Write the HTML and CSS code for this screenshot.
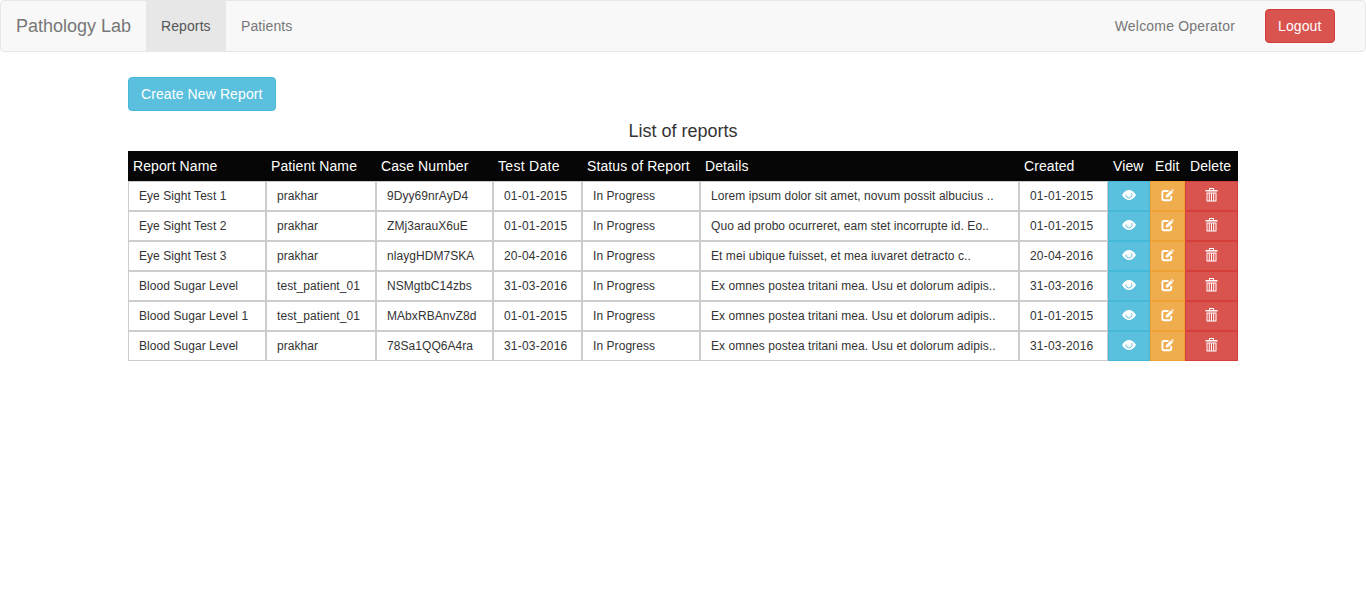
FILE: index.html
```html
<!DOCTYPE html>
<html>
<head>
  <meta charset="utf-8">
  <title>Pathology Lab</title>
  <link rel="stylesheet" href="styles.css">
</head>
<body>
  <svg class="defs" width="0" height="0">
    <symbol id="i-eye" viewBox="0 0 14 14">
      <path fill="#fff" d="M0 7C2 3.500 4.500 2 7 2s5 1.500 7 5c-2 3.500-4.500 5-7 5S2 10.500 0 7z"/>
      <path fill="none" stroke="#5bc0de" d="M4 6.500A3 3 0 1 0 9.500 5.300"/>
    </symbol>
    <symbol id="i-edit" viewBox="0 0 13 14">
      <path fill="none" stroke="#fff" stroke-width="1.900" d="M7.500 3H3C1.900 3 1.400 3.600 1.400 4.700V10.600C1.400 11.700 1.900 12.200 3 12.200H8.500C9.600 12.200 10.200 11.700 10.200 10.600V8"/>
      <path fill="#fff" d="M4.800 9.500V7.300L10 2.300 12 4.300 7 9.500zM10.600 1.700 11.300 1 13 2.700 12.400 3.500z"/>
    </symbol>
    <symbol id="i-trash" viewBox="0 0 13 14">
      <path fill="#fff" d="M4 0H9V2H12.500V3.500H.5V2H4zM5 1V2H8V1z" fill-rule="evenodd"/>
      <path fill="#fff" fill-rule="evenodd" d="M1.500 4.500H11.500V13.500H1.500zM2.500 5.500V12.500H3.800V5.500zM4.800 5.500V12.500H6V5.500zM7 5.500V12.500H8.200V5.500zM9.200 5.500V12.500H10.500V5.500z"/>
    </symbol>
  </svg>

  <nav class="navbar">
    <a class="brand">Pathology Lab</a>
    <ul class="nav">
      <li class="active"><a>Reports</a></li>
      <li><a>Patients</a></li>
    </ul>
    <div class="nav-right">
      <span class="welcome">Welcome Operator</span>
      <a class="btn btn-danger">Logout</a>
    </div>
  </nav>

  <div class="container">
    <a class="btn btn-info">Create New Report</a>
    <h4 class="title">List of reports</h4>
    <table class="reports">
      <colgroup>
        <col class="c-name"><col class="c-patient"><col class="c-case"><col class="c-date">
        <col class="c-status"><col class="c-details"><col class="c-created">
        <col class="c-view"><col class="c-edit"><col class="c-delete">
      </colgroup>
      <thead>
        <tr>
          <th>Report Name</th><th>Patient Name</th><th>Case Number</th><th class="date">Test Date</th>
          <th>Status of Report</th><th>Details</th><th>Created</th>
          <th>View</th><th>Edit</th><th>Delete</th>
        </tr>
      </thead>
      <tbody>
        <tr>
          <td>Eye Sight Test 1</td><td>prakhar</td><td>9Dyy69nrAyD4</td><td class="date">01-01-2015</td><td>In Progress</td>
          <td>Lorem ipsum dolor sit amet, novum possit albucius ..</td><td class="date">01-01-2015</td>
          <td class="act view"><svg class="icon"><use href="#i-eye"/></svg></td>
          <td class="act edit"><svg class="icon"><use href="#i-edit"/></svg></td>
          <td class="act del"><svg class="icon"><use href="#i-trash"/></svg></td>
        </tr>
        <tr>
          <td>Eye Sight Test 2</td><td>prakhar</td><td>ZMj3arauX6uE</td><td class="date">01-01-2015</td><td>In Progress</td>
          <td>Quo ad probo ocurreret, eam stet incorrupte id. Eo..</td><td class="date">01-01-2015</td>
          <td class="act view"><svg class="icon"><use href="#i-eye"/></svg></td>
          <td class="act edit"><svg class="icon"><use href="#i-edit"/></svg></td>
          <td class="act del"><svg class="icon"><use href="#i-trash"/></svg></td>
        </tr>
        <tr>
          <td>Eye Sight Test 3</td><td>prakhar</td><td>nlaygHDM7SKA</td><td class="date">20-04-2016</td><td>In Progress</td>
          <td>Et mei ubique fuisset, et mea iuvaret detracto c..</td><td class="date">20-04-2016</td>
          <td class="act view"><svg class="icon"><use href="#i-eye"/></svg></td>
          <td class="act edit"><svg class="icon"><use href="#i-edit"/></svg></td>
          <td class="act del"><svg class="icon"><use href="#i-trash"/></svg></td>
        </tr>
        <tr>
          <td>Blood Sugar Level</td><td>test_patient_01</td><td>NSMgtbC14zbs</td><td class="date">31-03-2016</td><td>In Progress</td>
          <td>Ex omnes postea tritani mea. Usu et dolorum adipis..</td><td class="date">31-03-2016</td>
          <td class="act view"><svg class="icon"><use href="#i-eye"/></svg></td>
          <td class="act edit"><svg class="icon"><use href="#i-edit"/></svg></td>
          <td class="act del"><svg class="icon"><use href="#i-trash"/></svg></td>
        </tr>
        <tr>
          <td>Blood Sugar Level 1</td><td>test_patient_01</td><td>MAbxRBAnvZ8d</td><td class="date">01-01-2015</td><td>In Progress</td>
          <td>Ex omnes postea tritani mea. Usu et dolorum adipis..</td><td class="date">01-01-2015</td>
          <td class="act view"><svg class="icon"><use href="#i-eye"/></svg></td>
          <td class="act edit"><svg class="icon"><use href="#i-edit"/></svg></td>
          <td class="act del"><svg class="icon"><use href="#i-trash"/></svg></td>
        </tr>
        <tr>
          <td>Blood Sugar Level</td><td>prakhar</td><td>78Sa1QQ6A4ra</td><td class="date">31-03-2016</td><td>In Progress</td>
          <td>Ex omnes postea tritani mea. Usu et dolorum adipis..</td><td class="date">31-03-2016</td>
          <td class="act view"><svg class="icon"><use href="#i-eye"/></svg></td>
          <td class="act edit"><svg class="icon"><use href="#i-edit"/></svg></td>
          <td class="act del"><svg class="icon"><use href="#i-trash"/></svg></td>
        </tr>
      </tbody>
    </table>
  </div>
</body>
</html>
```
FILE: styles.css
```css
* { box-sizing: border-box; }
html, body { margin: 0; }
body { font-family: "Liberation Sans", Arial, sans-serif; font-size: 14px; line-height: 20px; letter-spacing: .1px; color: #333; background: #fff; }
.defs { display: block; height: 0; }

/* navbar */
.navbar { display: flex; height: 52px; background: #f8f8f8; border: 1px solid #e7e7e7; border-radius: 4px; }
.brand { width: 145px; padding: 15px; font-size: 18px; letter-spacing: 0; white-space: nowrap; color: #777; }
.nav { display: flex; list-style: none; margin: 0; padding: 0; }
.nav a { display: block; padding: 15px; color: #777; }
.nav .active a { width: 80px; background: #e7e7e7; color: #555; }
.nav-right { display: flex; margin-left: auto; align-items: center; padding-right: 30px; }
.welcome { color: #777; margin-right: 30px; letter-spacing: .19px; }

.btn { display: inline-block; padding: 6px 12px; border: 1px solid transparent; border-radius: 4px; color: #fff; }
.btn-danger { width: 70px; background: #d9534f; border-color: #d43f3a; }
.btn-info { width: 148px; background: #5bc0de; border-color: #46b8da; }

.container { width: 1110px; margin: 25px 0 0 128px; }
.title { margin: 10px 0; font-size: 18px; font-weight: 500; line-height: 20px; letter-spacing: 0; text-align: center; }

/* table */
.reports { table-layout: fixed; width: 1110px; border-collapse: separate; border-spacing: 0; font-size: 12px; letter-spacing: .06px; color: #333; }
.c-name { width: 138px; } .c-patient { width: 110px; } .c-case { width: 117px; } .c-date { width: 89px; }
.c-status { width: 118px; } .c-details { width: 319px; } .c-created { width: 89px; }
.c-view { width: 42px; } .c-edit { width: 35px; } .c-delete { width: 53px; }
.reports th { height: 30px; padding: 0 5px; background: #060606; color: #fff; font-size: 14px; font-weight: 400; letter-spacing: .1px; text-align: left; white-space: nowrap; }
.reports th.date { letter-spacing: .3px; }
.reports td { height: 30px; padding: 0 10px; border: 1px solid #ccc; white-space: nowrap; overflow: hidden; }
.reports td.date { letter-spacing: .2px; }
.reports td.act { padding: 0; text-align: center; }
.reports td.view { background: #5bc0de; border-color: #46b8da; }
.reports td.edit { background: #f0ad4e; border-color: #eea236; }
.reports td.del { background: #d9534f; border-color: #d43f3a; }
.icon { display: block; width: 14px; height: 14px; margin: -2px auto 0; }
.edit .icon, .del .icon { width: 13px; }
```
